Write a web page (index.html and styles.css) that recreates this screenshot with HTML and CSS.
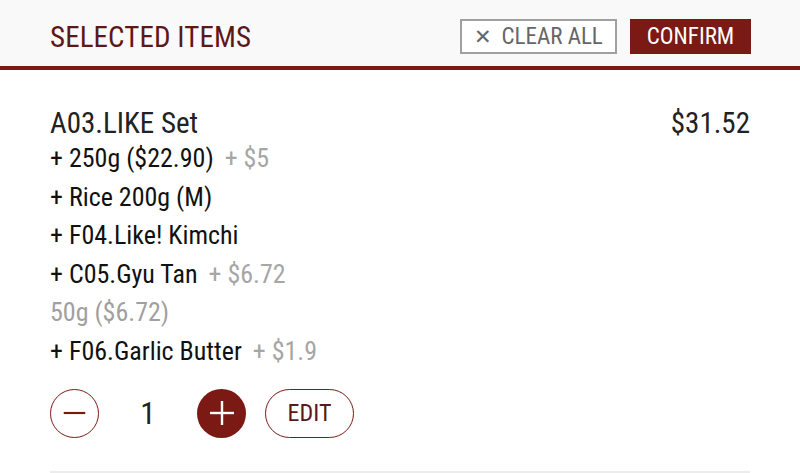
FILE: index.html
```html
<!DOCTYPE html>
<html>
<head>
<meta charset="utf-8">
<link rel="stylesheet" href="styles.css">
</head>
<body>
<header class="header">
  <h1 class="title">SELECTED ITEMS</h1>
  <div class="actions">
    <button class="btn-clear"><span class="x">✕</span> CLEAR ALL</button>
    <button class="btn-confirm">CONFIRM</button>
  </div>
</header>
<main class="list">
  <section class="item">
    <div class="item-head">
      <div class="item-name">A03.LIKE Set</div>
      <div class="item-price">$31.52</div>
    </div>
    <div class="opt">+ 250g ($22.90) <span class="extra">+ $5</span></div>
    <div class="opt">+ Rice 200g (M)</div>
    <div class="opt">+ F04.Like! Kimchi</div>
    <div class="opt">+ C05.Gyu Tan <span class="extra">+ $6.72</span></div>
    <div class="opt sub">50g ($6.72)</div>
    <div class="opt">+ F06.Garlic Butter <span class="extra">+ $1.9</span></div>
    <div class="controls">
      <button class="circle minus"><svg viewBox="0 0 48 48" width="48" height="48"><line x1="13" y1="24" x2="35" y2="24" stroke="#7b1a14" stroke-width="2.2"/></svg></button>
      <span class="qty">1</span>
      <button class="circle plus"><svg viewBox="0 0 48 48" width="48" height="48"><line x1="12" y1="24" x2="36" y2="24" stroke="#fff" stroke-width="2.4"/><line x1="24" y1="12" x2="24" y2="36" stroke="#fff" stroke-width="2.4"/></svg></button>
      <button class="btn-edit">EDIT</button>
    </div>
  </section>
</main>
</body>
</html>
```
FILE: styles.css
```css
* { box-sizing: border-box; }
html, body { margin: 0; padding: 0; background: #fff; }
body {
  font-family: "Roboto Condensed", "Liberation Sans Narrow", Roboto, sans-serif;
  font-stretch: condensed;
  width: 800px;
  height: 473px;
  overflow: hidden;
}
.header {
  height: 70px;
  background: #f9f9f9;
  border-bottom: 4px solid #7b1a14;
  display: flex;
  align-items: center;
  justify-content: space-between;
  padding: 7px 49px 0 50px;
}
.title {
  margin: 0;
  font-size: 29px;
  font-weight: 400;
  color: #5e1717;
  letter-spacing: 0.1px;
}
.actions { display: flex; gap: 13px; }
button { font-family: inherit; font-stretch: condensed; cursor: pointer; }
.btn-clear {
  width: 157px;
  height: 35px;
  border: 2px solid #a0a0a0;
  background: #fff;
  color: #666;
  font-size: 23px;
  padding: 0;
}
.btn-clear .x { font-size: 21px; margin-right: 4px; }
.btn-confirm {
  width: 121px;
  height: 35px;
  border: none;
  background: #7b1a14;
  color: #fff;
  font-size: 23px;
  padding: 0;
}
.list { padding: 0 50px; }
.item { padding-top: 37px; border-bottom: 2px solid #ececec; padding-bottom: 33px; }
.item-head { display: flex; justify-content: space-between; align-items: baseline; color: #222; font-size: 29px; line-height: 32px; }
.opt { font-size: 26px; line-height: 38.6px; color: #111; }
.extra { color: #a6a6a6; margin-left: 5px; }
.sub { color: #a0a0a0; }
.controls { display: flex; align-items: center; margin-top: 18px; }
.circle {
  width: 49px;
  height: 49px;
  border-radius: 50%;
  padding: 0;
  display: flex;
  align-items: center;
  justify-content: center;
}
.circle svg { display: block; }
.minus { border: 1.5px solid #7b1a14; background: #fff; }
.plus { border: none; background: #7b1a14; }
.qty { width: 98px; text-align: center; font-size: 31px; color: #222; }
.btn-edit {
  margin-left: 19px;
  width: 89px;
  height: 49px;
  border-radius: 25px;
  border: 1.5px solid #7b1a14;
  background: #fff;
  color: #5e1717;
  font-size: 24px;
  padding: 0;
}
```
